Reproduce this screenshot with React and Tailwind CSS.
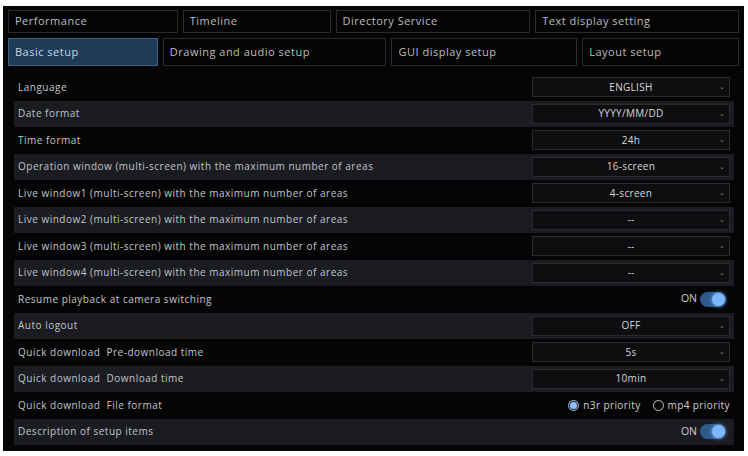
import React from "react";

const rows = [
  { label: "Language", type: "select", value: "ENGLISH" },
  { label: "Date format", type: "select", value: "YYYY/MM/DD" },
  { label: "Time format", type: "select", value: "24h" },
  { label: "Operation window (multi-screen) with the maximum number of areas", type: "select", value: "16-screen" },
  { label: "Live window1 (multi-screen) with the maximum number of areas", type: "select", value: "4-screen" },
  { label: "Live window2 (multi-screen) with the maximum number of areas", type: "select", value: "--" },
  { label: "Live window3 (multi-screen) with the maximum number of areas", type: "select", value: "--" },
  { label: "Live window4 (multi-screen) with the maximum number of areas", type: "select", value: "--" },
  { label: "Resume playback at camera switching", type: "toggle" },
  { label: "Auto logout", type: "select", value: "OFF" },
  { label: "Quick download  Pre-download time", type: "select", value: "5s" },
  { label: "Quick download  Download time", type: "select", value: "10min" },
  { label: "Quick download  File format", type: "radio" },
  { label: "Description of setup items", type: "toggle" },
];

function Select({ value }) {
  return (
    <div className="relative flex h-[20px] w-[198px] items-center justify-center border border-[#2c2c2e] bg-[#0e0e10] text-[10px] tracking-[0.3px] text-[#d8d8d8]">
      <span>{value}</span>
      <span className="absolute right-[4px] top-[5px] text-[7px] leading-none text-[#888]">⌄</span>
    </div>
  );
}

function Toggle() {
  return (
    <div className="flex items-center gap-[3px] pr-[4px]">
      <span className="text-[10.5px] text-[#d0d0d0]">ON</span>
      <div className="flex h-[15px] w-[26px] items-center justify-end rounded-full bg-[#2f5a8a] pr-[1px]">
        <div className="h-[13px] w-[13px] rounded-full bg-[#7cb8ff] shadow-[0_0_4px_#7cb8ff]" />
      </div>
    </div>
  );
}

function Radio() {
  return (
    <div className="flex items-center gap-[12px] text-[10px] tracking-[0.4px] text-[#d0d0d0]">
      <div className="flex items-center gap-[4px]">
        <div className="flex h-[11px] w-[11px] items-center justify-center rounded-full border border-[#9bb7d6] bg-[#1d2a3a]">
          <div className="h-[7px] w-[7px] rounded-full bg-[#8fc0ff]" />
        </div>
        <span>n3r priority</span>
      </div>
      <div className="flex items-center gap-[4px]">
        <div className="h-[11px] w-[11px] rounded-full border border-[#c0c0c0]" />
        <span>mp4 priority</span>
      </div>
    </div>
  );
}

function Tab({ label, w, active }) {
  return (
    <div
      className={
        "flex items-center px-[6px] text-[11px] tracking-[0.5px] " +
        (active
          ? "border border-[#3d6285] bg-[#1e3b58] text-[#c8d6e6]"
          : "border border-[#2a2a2a] bg-[#040404] text-[#bdbdbd]")
      }
      style={{ width: w }}
    >
      {label}
    </div>
  );
}

export default function App() {
  return (
    <div
      className="h-[456px] w-[748px] bg-white pl-[3px] pr-[4px] pt-[6px] pb-[5px]"
      style={{ fontFamily: '"Open Sans", "Noto Sans", sans-serif' }}
    >
      <div className="flex h-full w-full flex-col bg-[#050505] px-[5px] pt-[4px]">
        <div className="flex h-[23px] gap-[5px]">
          <Tab label="Performance" w={170} />
          <Tab label="Timeline" w={148} />
          <Tab label="Directory Service" w={195} />
          <Tab label="Text display setting" w={204} />
        </div>
        <div className="mt-[5px] flex h-[28px] gap-[5px]">
          <Tab label="Basic setup" w={150} active />
          <Tab label="Drawing and audio setup" w={224} />
          <Tab label="GUI display setup" w={186} />
          <Tab label="Layout setup" w={157} />
        </div>
        <div className="mt-[8px] flex flex-col pl-[6px] pr-[5px]">
          {rows.map((r, i) => (
            <div
              key={i}
              className={
                "flex h-[26.5px] items-center justify-between pl-[4px] pr-[4px] " +
                (i % 2 === 1 ? "bg-[#1a1c22]" : "bg-[#050505]")
              }
            >
              <span className="whitespace-pre text-[10px] tracking-[0.5px] text-[#c4c4c8]">{r.label}</span>
              {r.type === "select" && <Select value={r.value} />}
              {r.type === "toggle" && <Toggle />}
              {r.type === "radio" && <Radio />}
            </div>
          ))}
        </div>
      </div>
    </div>
  );
}
